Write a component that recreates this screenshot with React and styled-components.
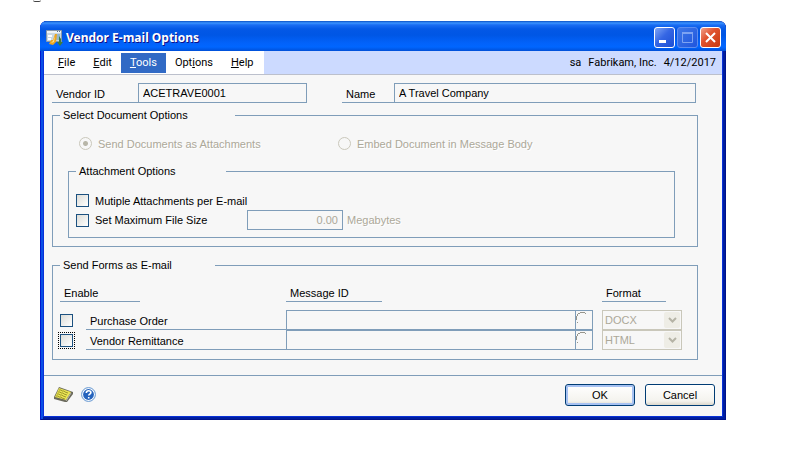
import React, { useId } from "react";
import styled, { createGlobalStyle, css } from "styled-components";

const line = "#7f9db9";
const face = "#f7f7f7";
const muted = "#aca899";

const GlobalStyle = createGlobalStyle`
  * { box-sizing: border-box; }
  body {
    margin: 0;
    background: #fff;
    color: #000;
    font: 11px/14px "Liberation Sans", Arial, sans-serif;
  }
  input, button, select { font: inherit; color: inherit; margin: 0; }
`;

const Page = styled.div`
  padding: 0 71px 32px 40px;
`;

const Scrap = styled.div`
  width: 8px;
  height: 2px;
  margin: 0 0 19px -7px;
  border: 0 solid #444;
  border-bottom-width: 1px;
  border-radius: 0 0 4px 4px;
`;

const Dialog = styled.section`
  min-width: 660px;
  border-radius: 7px 7px 0 0;
  background: #0831d9;
  box-shadow: inset 1px 0 #0019cf, inset -1px -1px #00138c, inset 3px 0 #0a4fe6, inset -3px -3px #001ea0;
  padding: 0 4px 4px;
`;

const TitleBar = styled.header`
  display: flex;
  align-items: center;
  gap: 3px;
  height: 30px;
  margin: 0 -4px;
  padding: 3px 5px 0 6px;
  border-radius: 7px 7px 0 0;
  background: linear-gradient(#0a4fc4 0, #3a93ff 2px, #1a6cf2 4px, #0458e6 8px, #0056e5 14px, #0262fa 22px, #0066ff 26px, #0050d8 30px);
`;

const Title = styled.h1`
  flex: 1;
  margin: 0;
  color: #fff;
  font: bold 12px/18px "Noto Sans", sans-serif;
  text-shadow: 1px 1px #0f1089;
`;

const Caption = styled.div`
  display: flex;
  gap: 2px;
`;

const captionFill = {
  close: "linear-gradient(135deg, #f0a08a, #e0532f 40%, #c8380e)",
  off: "linear-gradient(135deg, #3f78e8, #1f55dd)",
  normal: "linear-gradient(135deg, #7ea5f5, #3566e4 45%, #1c4fd4)",
};

const CaptionButton = styled.button`
  display: grid;
  place-items: center;
  width: 21px;
  height: 21px;
  padding: 0;
  border: 1px solid ${(p) => (p.$tone === "off" ? "#5d8df0" : "#fff")};
  border-radius: 3px;
  background: ${(p) => captionFill[p.$tone || "normal"]};
`;

const MenuBar = styled.nav`
  display: flex;
  align-items: stretch;
  height: 24px;
  border-bottom: 1px solid #bcc0cc;
  background: #ccdaff;
  font: 11px/14px Roboto, sans-serif;
`;

const Menus = styled.div`
  display: flex;
  width: 220px;
  padding: 2px 0 1px 5px;
  background: #fff;
`;

const MenuItem = styled.button`
  padding: 0 9px;
  border: 0;
  background: ${(p) => (p.$open ? "#316ac5" : "transparent")};
  color: ${(p) => (p.$open ? "#fff" : "#000")};
`;

const Session = styled.div`
  display: flex;
  flex: 1;
  justify-content: flex-end;
  align-items: center;
  gap: 7px;
  padding-right: 6px;
`;

const Body = styled.form`
  background: ${face};
  padding: 8px 0 0;
`;

const Content = styled.div`
  padding: 0 24px 15px 8px;
`;

const FieldRow = styled.div`
  display: flex;
  height: 20px;
  padding-right: 2px;
`;

const FieldLabel = styled.label`
  width: ${(p) => p.$width}px;
  margin-left: ${(p) => p.$indent || 0}px;
  padding: 4px 0 0 4px;
  border-bottom: 1px solid ${line};
`;

const TextBox = styled.input`
  width: ${(p) => (p.$width ? `${p.$width}px` : "auto")};
  min-width: 0;
  flex: ${(p) => (p.$width ? "none" : "1")};
  height: 20px;
  padding: 0 4px;
  border: 1px solid ${line};
  border-radius: 0;
  background: ${face};
  outline: 0;
  ${(p) => p.$numeric && css`text-align: right;`}
  &:disabled { color: ${muted}; }
`;

const Group = styled.fieldset`
  min-width: 0;
  margin: ${(p) => p.$margin || "0"};
  padding: ${(p) => p.$padding};
  border: 1px solid ${line};
`;

const Legend = styled.legend`
  width: ${(p) => p.$width}px;
  height: 14px;
  padding: 0 3px;
`;

const RadioRow = styled.div`
  display: grid;
  grid-template-columns: 259px 1fr;
  padding-left: 19px;
`;

const Choice = styled.label`
  display: flex;
  align-items: center;
  gap: 6px;
  height: 19px;
  color: ${(p) => (p.$disabled ? muted : "inherit")};
  text-shadow: ${(p) => (p.$disabled ? "1px 1px #fff" : "none")};
`;

const Radio = styled.input.attrs({ type: "radio" })`
  appearance: none;
  width: 13px;
  height: 13px;
  border: 1px solid #cac8bb;
  border-radius: 50%;
  background: ${face};
  &:checked { background: radial-gradient(circle, #b8b6a8 0 2px, ${face} 3px); }
`;

const Check = styled.input.attrs({ type: "checkbox" })`
  appearance: none;
  display: block;
  flex: none;
  width: 13px;
  height: 13px;
  border: 1px solid #1c5180;
  background: linear-gradient(135deg, #dcdcd7, #fff);
  outline: ${(p) => (p.$focused ? "1px dotted #000" : "0")};
  outline-offset: 1px;
`;

const SizeRow = styled.div`
  display: flex;
  align-items: center;
  height: 20px;
`;

const SizeLabel = styled.div`
  width: 171px;
`;

const Unit = styled.span`
  padding-left: 4px;
  color: ${muted};
  text-shadow: 1px 1px #fff;
`;

const FormsTable = styled.table`
  width: 100%;
  table-layout: fixed;
  border-collapse: separate;
  border-spacing: 0;
  td, th { padding: 0; text-align: left; font-weight: normal; }
  tbody tr { height: 20px; }
`;

const Col = styled.col`
  width: ${(p) => (p.$width ? `${p.$width}px` : "auto")};
`;

const Heading = styled.div`
  width: ${(p) => p.$width}px;
  height: 16px;
  margin-bottom: 8px;
  padding-left: 4px;
  border-bottom: 1px solid ${line};
`;

const FormName = styled.label`
  display: block;
  height: 20px;
  padding: 4px 0 0 4px;
  border-bottom: 1px solid ${line};
`;

const Lookup = styled.div`
  display: flex;
  margin-right: 9px;
  input { border-right: 0; }
`;

const LookupButton = styled.button`
  display: block;
  width: 18px;
  height: 20px;
  padding: 0;
  border: 1px solid ${line};
  background: ${face};
  svg { display: block; }
`;

const Picker = styled.div`
  display: grid;
  grid-template-columns: 1fr 18px;
  height: 20px;
  border: 1px solid #c9c7ba;
  background: ${face};
`;

const PickerSelect = styled.select`
  appearance: none;
  grid-area: 1 / 1 / 2 / 3;
  width: 100%;
  height: 18px;
  padding: 0 2px;
  border: 0;
  background: transparent;
  &:disabled { color: ${muted}; opacity: 1; }
`;

const PickerArrow = styled.span`
  grid-area: 1 / 2;
  display: grid;
  place-items: center;
  margin: 1px;
  border-radius: 2px;
  background: #eeede6;
  pointer-events: none;
`;

const Footer = styled.footer`
  display: flex;
  align-items: center;
  gap: 7px;
  height: 41px;
  padding: 0 7px 3px 10px;
  border-top: 1px solid ${line};
`;

const IconButton = styled.button`
  display: block;
  padding: 0;
  border: 0;
  background: none;
  svg { display: block; }
`;

const Actions = styled.div`
  display: flex;
  flex: 1;
  justify-content: flex-end;
  gap: 10px;
`;

const PushButton = styled.button`
  width: 70px;
  height: 22px;
  padding: 0;
  border: 1px solid #003c74;
  border-radius: 3px;
  background: linear-gradient(#fff, #f4f3ee 80%, #dcd8cc);
  box-shadow: ${(p) => (p.$primary ? "inset 0 0 0 2px #a6c1f2" : "none")};
`;

const AppIcon = () => (
  <svg width="17" height="17" viewBox="0 0 17 17" aria-hidden="true">
    <path d="M0.500 1.500h15v11h-15z" fill="#c9d8e2" stroke="#8a99a8" />
    <path d="M1 2h14v2H1z" fill="#eef3f6" />
    <path d="M11 2h1v1h-1zM13 2h1v1h-1z" fill="#607488" />
    <path d="M2 6h4v2H2zM2 9h3v2H2z" fill="#fff" />
    <path d="M9 5h5v6H9z" fill="#93b6cc" />
    <path d="M3 15l2-4h2l2-6h2l-1 8-3 3z" fill="#eda51f" />
    <path d="M5 14l2-2 2-5-1 6z" fill="#ffe28a" />
    <path d="M13 7l2 3v3h2l-3 4-3-4h2z" fill="#3f7d3c" />
  </svg>
);

const NoteIcon = () => (
  <svg width="20" height="16" viewBox="0 0 20 16" aria-hidden="true">
    <path d="M5 0l14 5v2l-6 8h-2L0 12v-2z" fill="#6b6a5c" />
    <path d="M5 1l12 4-5 8-11-3z" fill="#e9e454" />
    <path d="M5 3l2 0 1 1 2 0 1 1 3 1M4 5l2 0 1 1 2 0 1 1 3 1M3 7l2 0 1 1 2 0 1 1 3 1M2 9l2 0 1 1 2 0 1 1 3 1" stroke="#a19a2c" fill="none" />
    <path d="M17 6l-5 8" stroke="#b9b8aa" fill="none" />
  </svg>
);

const HelpIcon = () => (
  <svg width="15" height="15" viewBox="0 0 15 15" aria-hidden="true">
    <circle cx="7.500" cy="7.500" r="6.900" fill="#fff" stroke="#5f93cf" />
    <circle cx="7.500" cy="7.500" r="5.400" fill="#2463bd" />
    <path d="M5.300 6c0-3.200 4.600-2.800 4.600-.4 0 1.500-2.200 1.500-2.200 3M7.700 10v1.600" stroke="#fff" strokeWidth="1.600" fill="none" />
  </svg>
);

const LookupArc = () => (
  <svg width="16" height="18" viewBox="0 0 16 18" aria-hidden="true">
    <path d="M1.500 12v-1M0.500 9V5M1.500 5V3M2 2.500h2M4 1.500h5M9.500 2v1" stroke="#96958c" fill="none" />
  </svg>
);

const formats = ["DOCX", "HTML", "PDF", "XML"];

function FormRow({ name, format, focused }) {
  const id = useId();
  return (
    <tr>
      <td><Check id={id} $focused={focused} /></td>
      <td><FormName htmlFor={id}>{name}</FormName></td>
      <td>
        <Lookup>
          <TextBox aria-label={`${name} message ID`} />
          <LookupButton type="button" aria-label={`Look up ${name} message`}><LookupArc /></LookupButton>
        </Lookup>
      </td>
      <td>
        <Picker>
          <PickerSelect aria-label={`${name} format`} defaultValue={format} disabled>
            {formats.map((f) => <option key={f}>{f}</option>)}
          </PickerSelect>
          <PickerArrow>
            <svg width="9" height="6" viewBox="0 0 9 6" aria-hidden="true">
              <path d="M1 1l3.500 3.500L8 1" stroke="#b5b3a6" strokeWidth="2" fill="none" />
            </svg>
          </PickerArrow>
        </Picker>
      </td>
    </tr>
  );
}

export default function App() {
  return (
    <Page>
      <GlobalStyle />
      <Scrap />
      <Dialog aria-labelledby="dialog-title">
        <TitleBar>
          <AppIcon />
          <Title id="dialog-title">Vendor E-mail Options</Title>
          <Caption>
            <CaptionButton aria-label="Minimize">
              <svg width="19" height="19"><path d="M4 12h7v3H4z" fill="#fff" /></svg>
            </CaptionButton>
            <CaptionButton aria-label="Maximize" $tone="off" disabled>
              <svg width="19" height="19"><path d="M4.500 5v9.500h10V5M4 5h11" fill="none" stroke="#7da3f2" /><path d="M4 4h11v2H4z" fill="#7da3f2" /></svg>
            </CaptionButton>
            <CaptionButton aria-label="Close" $tone="close">
              <svg width="19" height="19"><path d="M5 5l9 9M14 5l-9 9" stroke="#fff" strokeWidth="2" /></svg>
            </CaptionButton>
          </Caption>
        </TitleBar>
        <MenuBar>
          <Menus>
            <MenuItem><u>F</u>ile</MenuItem>
            <MenuItem><u>E</u>dit</MenuItem>
            <MenuItem $open><u>T</u>ools</MenuItem>
            <MenuItem>Opt<u>i</u>ons</MenuItem>
            <MenuItem><u>H</u>elp</MenuItem>
          </Menus>
          <Session>
            <span>sa</span>
            <span>Fabrikam, Inc.</span>
            <span>4/12/2017</span>
          </Session>
        </MenuBar>
        <Body onSubmit={(e) => e.preventDefault()}>
          <Content>
            <FieldRow>
              <FieldLabel htmlFor="vendor" $width={86}>Vendor ID</FieldLabel>
              <TextBox id="vendor" $width={169} defaultValue="ACETRAVE0001" readOnly />
              <FieldLabel htmlFor="name" $width={52} $indent={35}>Name</FieldLabel>
              <TextBox id="name" defaultValue="A Travel Company" readOnly />
            </FieldRow>
            <Group $margin="5px 0 0" $padding="12px 22px 8px 7px">
              <Legend $width={175}>Select Document Options</Legend>
              <RadioRow>
                <Choice $disabled><Radio name="delivery" defaultChecked disabled />Send Documents as Attachments</Choice>
                <Choice $disabled><Radio name="delivery" disabled />Embed Document in Message Body</Choice>
              </RadioRow>
              <Group $margin="11px 0 0 8px" $padding="13px 7px 7px">
                <Legend $width={150}>Attachment Options</Legend>
                <Choice><Check />Mutiple Attachments per E-mail</Choice>
                <SizeRow>
                  <SizeLabel><Choice><Check />Set Maximum File Size</Choice></SizeLabel>
                  <TextBox $width={96} $numeric defaultValue="0.00" aria-label="Maximum file size" disabled />
                  <Unit>Megabytes</Unit>
                </SizeRow>
              </Group>
            </Group>
            <Group $margin="11px 0 0" $padding="14px 15px 9px 7px">
              <Legend $width={155}>Send Forms as E-mail</Legend>
              <FormsTable>
                <colgroup><Col $width={26} /><Col $width={200} /><Col /><Col $width={80} /></colgroup>
                <thead>
                  <tr>
                    <th colSpan={2}><Heading $width={80}>Enable</Heading></th>
                    <th><Heading $width={96}>Message ID</Heading></th>
                    <th><Heading $width={64}>Format</Heading></th>
                  </tr>
                </thead>
                <tbody>
                  <FormRow name="Purchase Order" format="DOCX" />
                  <FormRow name="Vendor Remittance" format="HTML" focused />
                </tbody>
              </FormsTable>
            </Group>
          </Content>
          <Footer>
            <IconButton type="button" aria-label="Note"><NoteIcon /></IconButton>
            <IconButton type="button" aria-label="Help"><HelpIcon /></IconButton>
            <Actions>
              <PushButton type="submit" $primary>OK</PushButton>
              <PushButton type="button">Cancel</PushButton>
            </Actions>
          </Footer>
        </Body>
      </Dialog>
    </Page>
  );
}
